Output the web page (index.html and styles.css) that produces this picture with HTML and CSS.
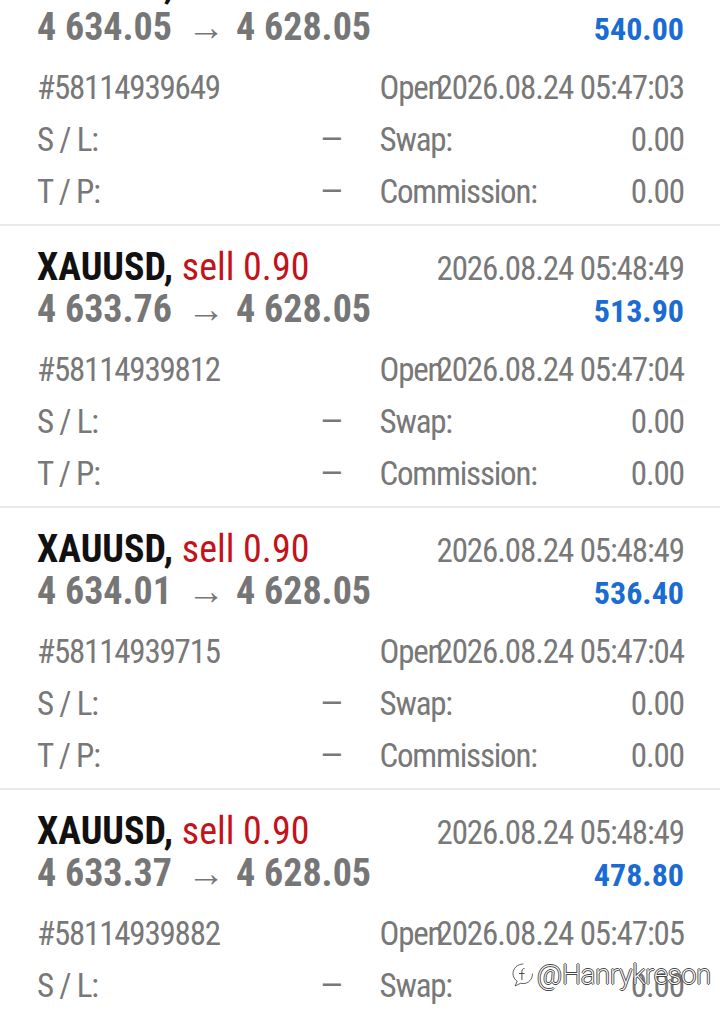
FILE: index.html
```html
<!DOCTYPE html>
<html lang="en">

	<head>
		<meta charset="UTF-8" />
		<meta name="viewport" content="width=device-width, initial-scale=1.0" />
		<title>History</title>
		<link rel="stylesheet" href="styles.css">
	</head>

	<body>
		<div class="deals">
			<div class="deal">
				<div class="head">
					<span class="symbol">XAUUSD, <span class="type">sell 0.90</span></span>
					<span class="time">2026.08.24 05:48:49</span>
				</div>
				<div class="head">
					<span class="price">4 634.05<span class="arrow">→</span>4 628.05</span>
					<span class="profit">540.00</span>
				</div>
				<div class="info">
					<div class="cell">#58114939649</div>
					<div class="cell"><span>Open</span><span class="val">2026.08.24 05:47:03</span></div>
					<div class="cell"><span>S / L:</span><span class="val">—</span></div>
					<div class="cell"><span>Swap:</span><span class="val">0.00</span></div>
					<div class="cell"><span>T / P:</span><span class="val">—</span></div>
					<div class="cell"><span>Commission:</span><span class="val">0.00</span></div>
				</div>
			</div>

			<div class="deal">
				<div class="head">
					<span class="symbol">XAUUSD, <span class="type">sell 0.90</span></span>
					<span class="time">2026.08.24 05:48:49</span>
				</div>
				<div class="head">
					<span class="price">4 633.76<span class="arrow">→</span>4 628.05</span>
					<span class="profit">513.90</span>
				</div>
				<div class="info">
					<div class="cell">#58114939812</div>
					<div class="cell"><span>Open</span><span class="val">2026.08.24 05:47:04</span></div>
					<div class="cell"><span>S / L:</span><span class="val">—</span></div>
					<div class="cell"><span>Swap:</span><span class="val">0.00</span></div>
					<div class="cell"><span>T / P:</span><span class="val">—</span></div>
					<div class="cell"><span>Commission:</span><span class="val">0.00</span></div>
				</div>
			</div>

			<div class="deal">
				<div class="head">
					<span class="symbol">XAUUSD, <span class="type">sell 0.90</span></span>
					<span class="time">2026.08.24 05:48:49</span>
				</div>
				<div class="head">
					<span class="price">4 634.01<span class="arrow">→</span>4 628.05</span>
					<span class="profit">536.40</span>
				</div>
				<div class="info">
					<div class="cell">#58114939715</div>
					<div class="cell"><span>Open</span><span class="val">2026.08.24 05:47:04</span></div>
					<div class="cell"><span>S / L:</span><span class="val">—</span></div>
					<div class="cell"><span>Swap:</span><span class="val">0.00</span></div>
					<div class="cell"><span>T / P:</span><span class="val">—</span></div>
					<div class="cell"><span>Commission:</span><span class="val">0.00</span></div>
				</div>
			</div>

			<div class="deal">
				<div class="head">
					<span class="symbol">XAUUSD, <span class="type">sell 0.90</span></span>
					<span class="time">2026.08.24 05:48:49</span>
				</div>
				<div class="head">
					<span class="price">4 633.37<span class="arrow">→</span>4 628.05</span>
					<span class="profit">478.80</span>
				</div>
				<div class="info">
					<div class="cell">#58114939882</div>
					<div class="cell"><span>Open</span><span class="val">2026.08.24 05:47:05</span></div>
					<div class="cell"><span>S / L:</span><span class="val">—</span></div>
					<div class="cell"><span>Swap:</span><span class="val">0.00</span></div>
					<div class="cell"><span>T / P:</span><span class="val">—</span></div>
					<div class="cell"><span>Commission:</span><span class="val">0.00</span></div>
				</div>
			</div>
		</div>

		<!-- watermark -->
		<div class="mark">
			<svg width="24" height="28" viewBox="0 0 24 28">
				<path d="M13 3c-5.5 0-10 4.3-10 9.6 0 3.2 1.6 5.9 4.2 7.6L5 25l5.6-2.7c.8.2 1.6.3 2.4.3 5.5 0 9.5-4.3 9.5-9.6" fill="none" stroke="#fff" stroke-width="2.6" stroke-linecap="round" />
				<path d="M13 3c-5.5 0-10 4.3-10 9.6 0 3.2 1.6 5.9 4.2 7.6L5 25l5.6-2.7c.8.2 1.6.3 2.4.3 5.5 0 9.5-4.3 9.5-9.6" fill="none" stroke="#3a3a3a" stroke-width="0.8" stroke-linecap="round" />
				<path d="M14.5 7.5c-1.8 0-2.6 1.1-2.6 2.8V19M9 12.5h5.5" fill="none" stroke="#3a3a3a" stroke-width="0.9" />
			</svg>
			<span>@Hanrykreson</span>
		</div>
	</body>

</html>
```

FILE: styles.css
```css
body {
	margin: 0;
	background: #fff;
	font-family: "Roboto Condensed", Roboto, "Liberation Sans Narrow", sans-serif;
	font-stretch: 75%;
	color: #787878;
	overflow: hidden;
}

.deals {
	margin-top: -56px;
}

.deal {
	padding: 20px 36px 6px 37px;
	border-bottom: 2px solid #e9e9e9;
}

.head {
	display: flex;
	justify-content: space-between;
	align-items: baseline;
	height: 42px;
	line-height: 42px;
	white-space: nowrap;
}

.symbol {
	font-size: 38px;
	font-weight: 700;
	color: #111;
}

.symbol .type {
	font-weight: 400;
	color: #c3121a;
}

.time {
	font-size: 33px;
	letter-spacing: -1.1px;
}

.price {
	font-size: 38px;
	font-weight: 700;
	color: #767676;
}

.arrow {
	font-size: 38px;
	font-weight: 400;
	margin: 0 11px 0 15px;
}

.profit {
	font-size: 32px;
	font-weight: 700;
	color: #1a6cd3;
}

.info {
	display: grid;
	grid-template-columns: 1fr 1fr;
	column-gap: 38px;
	margin-top: 14px;
	font-size: 33px;
	letter-spacing: -1.2px;
	line-height: 52px;
	white-space: nowrap;
}

.cell {
	display: grid;
}

.cell > span {
	grid-area: 1 / 1;
}

.cell .val {
	justify-self: end;
	letter-spacing: -1.1px;
}

.mark {
	position: absolute;
	left: 510px;
	top: 959px;
	display: flex;
	align-items: center;
	gap: 3px;
	font-family: Roboto, sans-serif;
	font-stretch: 100%;
	font-weight: 200;
	font-size: 27px;
	color: #fff;
	text-shadow: 1px 0 #444, -1px 0 #444, 0 1px #444, 0 -1px #444;
}
```
